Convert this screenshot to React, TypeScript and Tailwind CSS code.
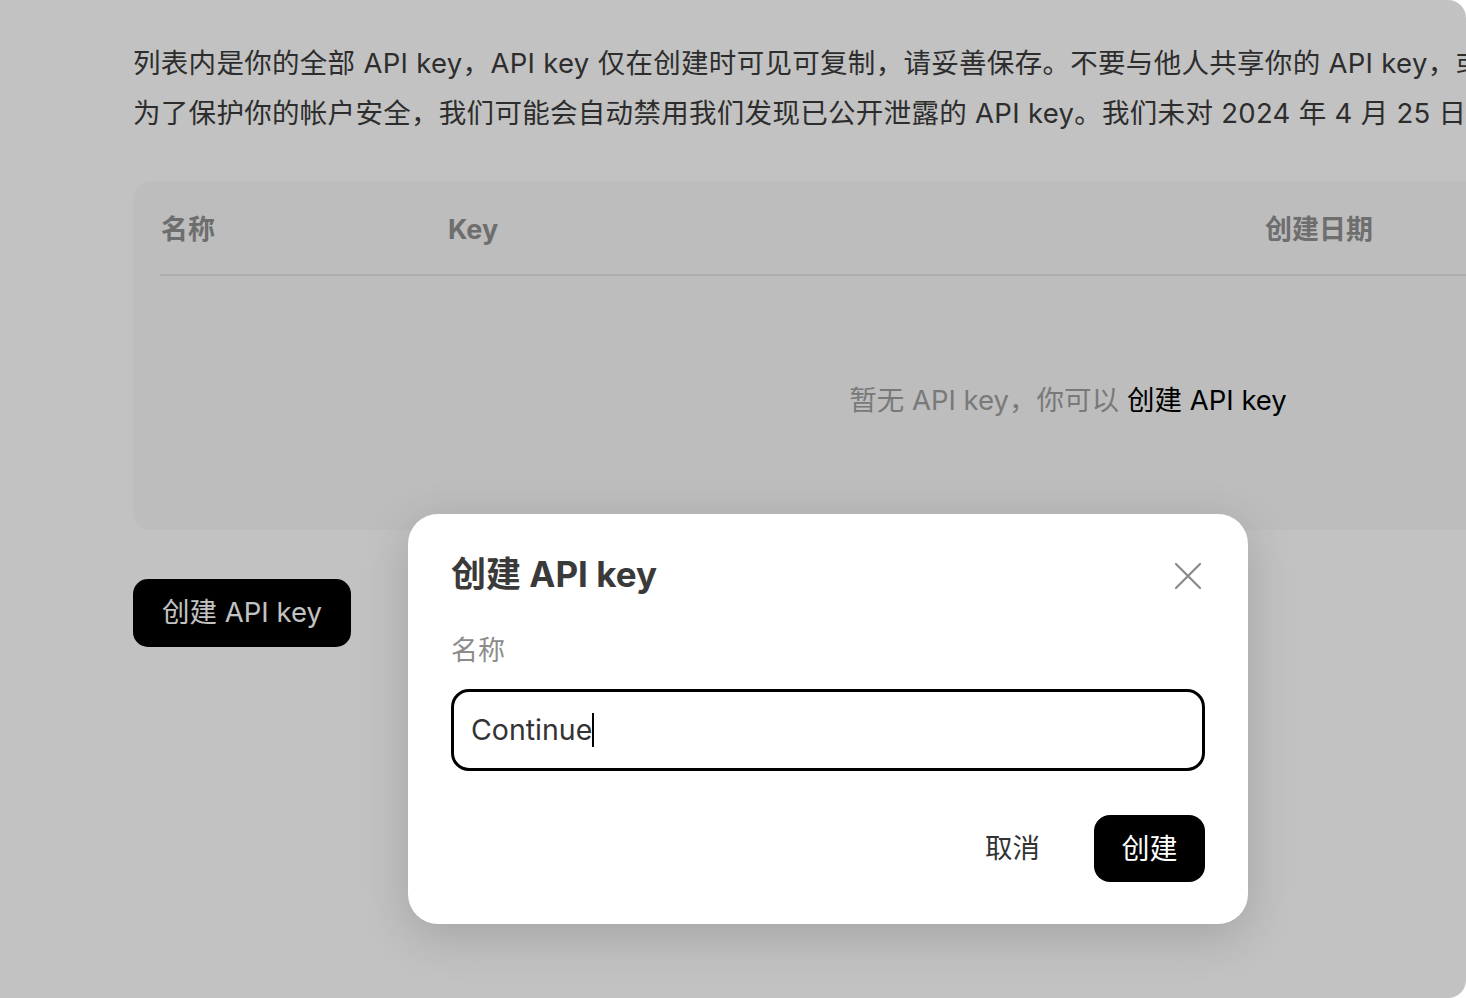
import React from "react";

const font = "font-['Inter','Noto_Sans_CJK_SC',sans-serif]";

export default function App() {
  return (
    <main className={`h-[998px] w-full bg-white ${font}`}>
      <div className="relative h-[998px] w-full overflow-hidden rounded-r-[18px] bg-white">
        {/* Page behind the dialog */}
        <section className="px-[133px] pt-[38px]">
          <p className="whitespace-nowrap text-[27.5px] leading-[50px] tracking-[0.3px] text-[#3c3c3c]">
            列表内是你的全部 API key，API key 仅在创建时可见可复制，请妥善保存。不要与他人共享你的 API key，或将其暴露在浏览器或其他客户端代码中。
          </p>
          <p className="whitespace-nowrap text-[27.5px] leading-[50px] tracking-[0.3px] text-[#3c3c3c]">
            为了保护你的帐户安全，我们可能会自动禁用我们发现已公开泄露的 API key。我们未对 2024 年 4 月 25 日前创建的 API key 的使用情况进行追踪。
          </p>

          <div className="mt-[43px] flex h-[349px] w-[1870px] flex-col rounded-[18px] bg-[#f9f9f9] px-[27px]">
            <div className="flex h-[95px] shrink-0 items-center border-b-[2px] border-[#e4e4e4] pt-[5px] text-[27px] font-bold text-[#919191]">
              <div className="w-[288px] pl-[1px]">名称</div>
              <div className="w-[817px]">Key</div>
              <div>创建日期</div>
            </div>
            <div className="flex flex-1 items-center justify-center pb-[4px] text-[27.5px]">
              <span className="text-[#a0a0a0]">暂无 API key，你可以</span>
              <span className="ml-[8px] text-black">创建 API key</span>
            </div>
          </div>

          <button className="mt-[49px] flex h-[68px] w-[218px] items-center justify-center rounded-[15px] bg-black text-[27.5px] text-white">
            创建 API key
          </button>
        </section>

        {/* Overlay */}
        <div className="absolute inset-0 bg-black/[0.24]" />

        {/* Dialog */}
        <div className="absolute left-[408px] top-[514px] flex h-[410px] w-[840px] flex-col rounded-[30px] bg-white px-[43px] pt-[39px] shadow-[0_12px_48px_rgba(0,0,0,0.16)]">
          <div className="flex items-center justify-between">
            <h2 className="text-[35px] font-bold leading-[42px] text-[#3a3a3a]">
              创建 API key
            </h2>
            <button className="mt-[4px] flex h-[34px] w-[34px] items-center justify-center">
              <svg width="26" height="26" viewBox="0 0 26 26" fill="none">
                <path
                  d="M1 1L25 25M25 1L1 25"
                  stroke="#8a8a8a"
                  strokeWidth="2.2"
                  strokeLinecap="round"
                />
              </svg>
            </button>
          </div>

          <label className="mt-[39px] text-[27px] leading-[34px] text-[#8c8c8c]">
            名称
          </label>

          <div className="mt-[21px] flex h-[82px] items-center rounded-[18px] border-[3px] border-black px-[17px]">
            <span className="text-[28.5px] text-[#333333]">Continue</span>
            <span className="h-[34px] w-[2px] bg-black" />
          </div>

          <div className="mt-[44px] flex items-center justify-end gap-[54px]">
            <span className="text-[27.5px] text-[#333333]">取消</span>
            <button className="flex h-[67px] w-[111px] items-center justify-center rounded-[16px] bg-black text-[28px] text-white">
              创建
            </button>
          </div>
        </div>
      </div>
    </main>
  );
}
